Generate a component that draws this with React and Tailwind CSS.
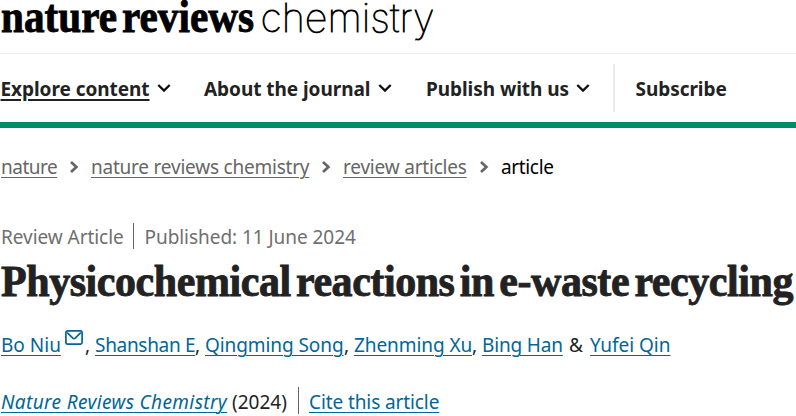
import React from "react";

const navItems = [
  { label: "Explore content", width: "w-[148px]", gap: "mr-[33.5px]", active: true },
  { label: "About the journal", width: "w-[166px]", gap: "mr-[34px]" },
  { label: "Publish with us", width: "w-[142px]", gap: "mr-[22.5px]" },
];

const crumbs = [
  { label: "nature", style: "w-[56px] tracking-[-0.5px]" },
  { label: "nature reviews chemistry", style: "w-[218px] tracking-[-0.22px]" },
  { label: "review articles", style: "w-[124px] tracking-[-0.2px]" },
];

const authors = [
  { name: "Shanshan E", style: "w-[100px] tracking-[-0.3px]", sep: "," },
  { name: "Qingming Song", style: "w-[139px] tracking-[-0.08px]", sep: "," },
  { name: "Zhenming Xu", style: "w-[118px] tracking-[-0.08px]", sep: "," },
  { name: "Bing Han", style: "w-[81px] tracking-[-0.15px]", sep: "&" },
];

const link = "block shrink-0 underline decoration-1 underline-offset-[3px]";

const ChevronDown = () => (
  <svg width="14" height="10" viewBox="0 0 14 10" className="ml-2 shrink-0" fill="none" stroke="#111" strokeWidth="2.4">
    <path d="M1.3 2 7 7.6 12.7 2" />
  </svg>
);

const ChevronRight = () => (
  <svg width="10" height="14" viewBox="0 0 10 14" className="ml-3 mr-[12px] shrink-0" fill="none" stroke="#666" strokeWidth="2.7">
    <path d="M2 2 7.4 7 2 12" />
  </svg>
);

const MailIcon = () => (
  <svg width="18" height="15" viewBox="0 0 18 15" className="ml-[4px] -mt-[16px] shrink-0" fill="none" stroke="#006699" strokeWidth="1.7">
    <rect x="0.9" y="0.9" width="16.2" height="13.2" rx="1.6" />
    <path d="m2.2 2.6 5.6 5.5q1.2 1 2.4 0l5.6-5.5" />
  </svg>
);

const Logo = () => (
  <svg width="440" height="53" viewBox="0 0 440 53" className="block overflow-visible">
    <text
      x="1" y="31.7" fontSize="47" fontWeight="700" textLength="253" lengthAdjust="spacingAndGlyphs"
      stroke="#000" strokeWidth="0.9" className="font-['Liberation_Serif',serif] [word-spacing:-6px]"
    >
      nature reviews
    </text>
    <text
      x="260.5" y="31.7" fontSize="40" fontWeight="100" textLength="174" lengthAdjust="spacingAndGlyphs"
      stroke="#000" strokeWidth="0.8" className="font-['Inter',sans-serif]"
    >
      chemistry
    </text>
  </svg>
);

const App = () => {
  return (
    <div className="h-[416px] w-[796px] overflow-hidden bg-white font-['Noto_Sans',sans-serif] text-[19px] leading-[28px] whitespace-nowrap text-[#222]">
      <header>
        <div className="h-[54px] border-b border-[#eee]">
          <Logo />
        </div>
        <nav className="flex h-[74px] items-center border-b-[6px] border-[#008c69] pl-[0.5px] font-bold">
          {navItems.map((item) => (
            <div key={item.label} className={`flex items-center ${item.gap}`}>
              <span
                className={`shrink-0 pt-0.5 tracking-[-0.05px] ${item.width} ${
                  item.active ? "underline decoration-2 underline-offset-[3px]" : ""
                }`}
              >
                {item.label}
              </span>
              <ChevronDown />
            </div>
          ))}
          <div className="h-12 border-l-2 border-[#eaeaea]" />
          <span className="ml-[21px] pt-0.5 tracking-[-0.05px]">Subscribe</span>
        </nav>
      </header>

      <main className="pl-px">
        <div className="mt-[25px] flex h-7 items-center text-[#666]">
          {crumbs.map((crumb) => (
            <React.Fragment key={crumb.label}>
              <a className={`${link} ${crumb.style}`}>{crumb.label}</a>
              <ChevronRight />
            </React.Fragment>
          ))}
          <span className="tracking-[-0.35px] text-black">article</span>
        </div>

        <div className="mt-[42px] flex h-[26px] items-center text-[#6f6f6f]">
          <span className="w-[132px] pt-0.5 tracking-[-0.05px]">Review Article</span>
          <span className="h-full border-l border-[#666]" />
          <span className="ml-[10.5px] pt-0.5 tracking-[-0.05px]">Published: 11 June 2024</span>
        </div>

        <h1 className="mt-[8px] h-[50px] w-max origin-left scale-x-[0.954] font-['Liberation_Serif',serif] text-[44px] leading-[50px] font-bold tracking-[-0.45px] [-webkit-text-stroke:0.9px_#222] [word-spacing:-5px]">
          Physicochemical reactions in e-waste recycling
        </h1>

        <div className="mt-[24px] flex h-7 items-center">
          <a className={`${link} w-[60px] text-[#006699]`}>Bo Niu</a>
          <MailIcon />
          <span className="w-[12px] pl-[2px]">,</span>
          {authors.map((author) => (
            <React.Fragment key={author.name}>
              <a className={`${link} text-[#006699] ${author.style}`}>{author.name}</a>
              <span className={author.sep === "&" ? "w-[27px] pl-[6px]" : "w-[10px]"}>{author.sep}</span>
            </React.Fragment>
          ))}
          <a className={`${link} text-[#006699]`}>Yufei Qin</a>
        </div>

        <div className="mt-[28px] flex h-[27px] items-center">
          <a className={`${link} w-[226px] pt-0.5 tracking-[0.38px] text-[#006699] italic`}>Nature Reviews Chemistry</a>
          <span className="ml-[5px] w-[66px] pt-0.5">(2024)</span>
          <span className="h-full border-l border-[#666]" />
          <a className={`${link} ml-[10px] pt-0.5 tracking-[-0.1px] text-[#006699]`}>Cite this article</a>
        </div>
      </main>
    </div>
  );
};

export default App;
